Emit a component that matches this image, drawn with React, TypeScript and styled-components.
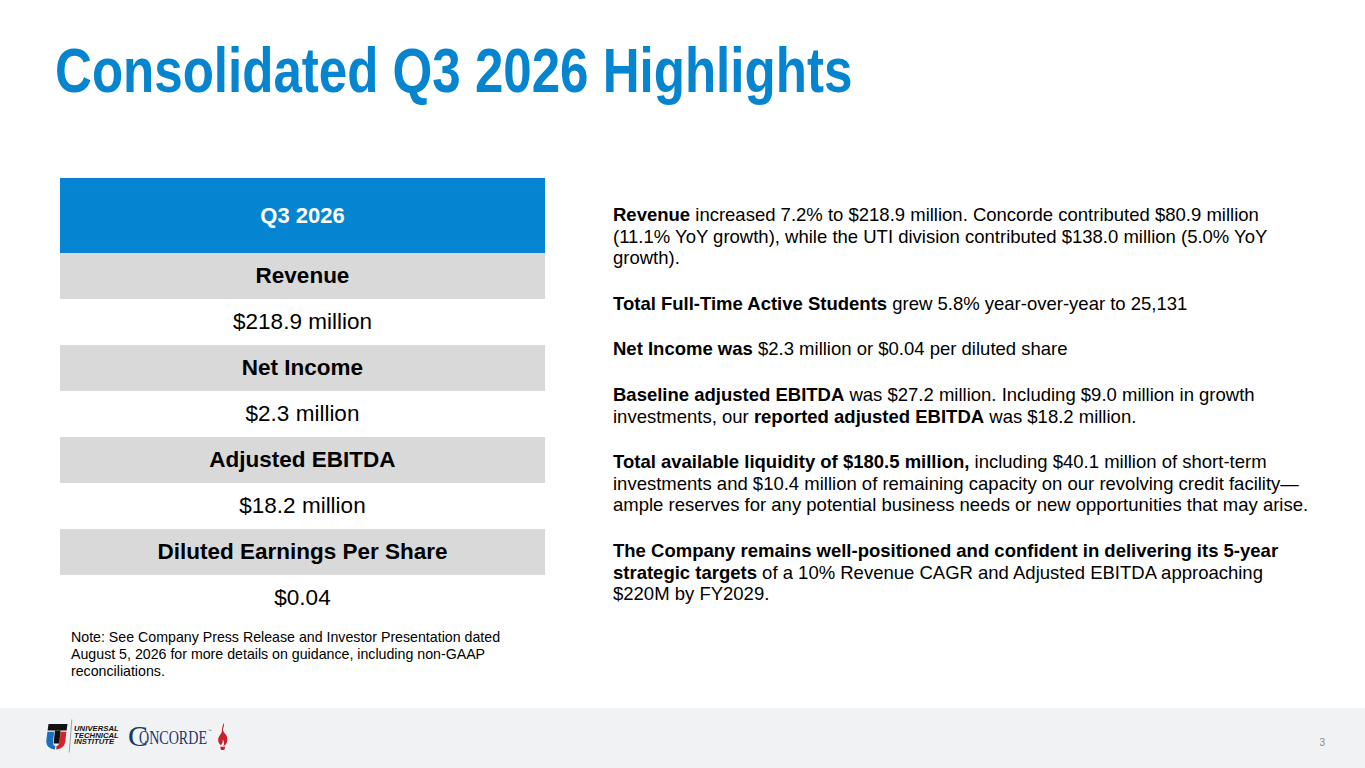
import { FC } from 'react'
import styled, { createGlobalStyle } from 'styled-components'

const GlobalStyle = createGlobalStyle`
  html, body {
    margin: 0;
    padding: 0;
    background: #ffffff;
  }
  body {
    font-family: "Liberation Sans", Arial, sans-serif;
    color: #000;
  }
`

const Slide = styled.div`
  width: 1365px;
  height: 768px;
  display: flex;
  flex-direction: column;
  overflow: hidden;
  background: #ffffff;
`

const TitleBar = styled.div`
  padding: 34px 0 0 55px;
  height: 72px;
`

// The deck uses a condensed bold face; no narrow family is installed, so squeeze the regular bold
const Title = styled.h1`
  display: inline-block;
  margin: 0;
  font-weight: 700;
  font-size: 62.5px;
  line-height: 72px;
  color: #0584d0;
  white-space: nowrap;
  transform: scaleX(0.817);
  transform-origin: left center;
`

const Body = styled.div`
  flex: 1;
  display: flex;
  column-gap: 68px;
  padding: 72px 0 0 60px;
`

const LeftColumn = styled.div`
  width: 485px;
  display: flex;
  flex-direction: column;
`

const Table = styled.div`
  display: flex;
  flex-direction: column;
`

const HeaderCell = styled.div`
  height: 75px;
  background: #0584d2;
  color: #ffffff;
  font-weight: 700;
  font-size: 22px;
  display: flex;
  align-items: center;
  justify-content: center;
`

const Cell = styled.div<{ $label?: boolean }>`
  height: 46px;
  background: ${p => (p.$label ? '#d9d9d9' : '#ffffff')};
  font-weight: ${p => (p.$label ? 700 : 400)};
  font-size: 22.5px;
  display: flex;
  align-items: center;
  justify-content: center;
`

const Note = styled.p`
  margin: 8px 0 0 11px;
  font-size: 14.2px;
  line-height: 17px;
  width: 460px;
`

const Highlights = styled.div`
  width: 700px;
  padding-top: 26px;
`

const Para = styled.p`
  margin: 0 0 24px;
  font-size: 18.5px;
  line-height: 21.6px;
  strong {
    font-weight: 700;
  }
`

const Footer = styled.footer`
  height: 60px;
  background: #f1f2f4;
  display: flex;
  align-items: center;
  justify-content: space-between;
  padding: 0 40px 0 45px;
`

const Logos = styled.div`
  display: flex;
  align-items: center;
  column-gap: 9px;
  margin-top: -4px;
`

const UtiLogo = styled.div`
  display: flex;
  align-items: center;
  column-gap: 1px;
`

const UtiWords = styled.div`
  display: flex;
  flex-direction: column;
  font-weight: 700;
  font-style: italic;
  font-size: 7.7px;
  line-height: 6.8px;
  letter-spacing: 0.05px;
  color: #111;
`

const ConcordeLogo = styled.div`
  display: flex;
  align-items: center;
  column-gap: 3px;
`

const PageNumber = styled.span`
  font-size: 10px;
  color: #8a8a8a;
  margin-top: 8px;
`

const rows = [
  { label: 'Revenue', value: '$218.9 million' },
  { label: 'Net Income', value: '$2.3 million' },
  { label: 'Adjusted EBITDA', value: '$18.2 million' },
  { label: 'Diluted Earnings Per Share', value: '$0.04' },
]

const UtiShield: FC = () => (
  <svg width="28" height="34" viewBox="0 0 28 34">
    {/* black T bar */}
    <polygon points="3.5,5 22.5,5 21.6,11.5 2.6,11.5" fill="#111" />
    {/* blue left half of the U */}
    <path d="M2.4,12.8 L9.2,12.8 L8,23 Q7.6,26 10.4,27 L9.9,30.5 Q1.6,29.5 1.2,22.5 Z" fill="#1a6fc0" />
    {/* red right half of the U */}
    <path d="M15.6,12.8 L21.4,12.8 L20.2,23 Q19,30 11.1,30.5 L11.6,27 Q14.2,26.2 14.6,23 Z" fill="#d2232a" />
    {/* T stem */}
    <polygon points="9.9,11.5 15.6,11.5 14.3,24.5 8.6,24.5" fill="#111" />
    {/* divider stroke */}
    <line x1="26.8" y1="0.5" x2="24.2" y2="33.5" stroke="#8c8c8c" strokeWidth="0.8" />
  </svg>
)

const ConcordeWord: FC = () => (
  <svg width="86" height="34" viewBox="0 0 86 34">
    <text x="0" y="27" fontFamily="Liberation Serif, serif" fontSize="30" fill="#1d3567">
      C
    </text>
    <text
      x="11"
      y="25"
      fontFamily="Liberation Serif, serif"
      fontSize="19.5"
      fill="#1d3567"
      textLength="68"
      lengthAdjust="spacingAndGlyphs"
    >
      ONCORDE
    </text>
    <text x="80.5" y="13" fontFamily="Liberation Sans, sans-serif" fontSize="3.2" fill="#1d3567">
      ™
    </text>
  </svg>
)

const Flame: FC = () => (
  <svg width="11" height="29" viewBox="0 0 11 28">
    <path
      d="M6.5,0.5 C8.3,4 4.6,6 6.8,9.5 C8.5,12 10.8,13.5 10.3,18 C9.9,21.5 7.8,23 6.3,23.6 C7.8,21 7,18.5 5.6,17 C6.2,19.5 5.2,21.3 4,22.7 C1.9,21.5 0.8,19 1.2,16.5 C1.8,13 5.1,11 5,7.5 C4.9,5 6.1,3 6.5,0.5 Z"
      fill="#c8202f"
    />
    <path d="M3.2,24.3 L8.2,24.3 L7.4,27.5 L4,27.5 Z" fill="#c8202f" />
  </svg>
)

const App: FC = () => (
  <>
    <GlobalStyle />
    <Slide>
      <TitleBar>
        <Title>Consolidated Q3 2026 Highlights</Title>
      </TitleBar>
      <Body>
        <LeftColumn>
          <Table>
            <HeaderCell>Q3 2026</HeaderCell>
            {rows.map(row => (
              <div key={row.label}>
                <Cell $label>{row.label}</Cell>
                <Cell>{row.value}</Cell>
              </div>
            ))}
          </Table>
          <Note>
            Note: See Company Press Release and Investor Presentation dated August 5, 2026 for more
            details on guidance, including non-GAAP reconciliations.
          </Note>
        </LeftColumn>
        <Highlights>
          <Para>
            <strong>Revenue</strong> increased 7.2% to $218.9 million. Concorde contributed $80.9 million
            (11.1% YoY growth), while the UTI division contributed $138.0 million (5.0% YoY growth).
          </Para>
          <Para>
            <strong>Total Full-Time Active Students</strong> grew 5.8% year-over-year to 25,131
          </Para>
          <Para>
            <strong>Net Income was</strong> $2.3 million or $0.04 per diluted share
          </Para>
          <Para>
            <strong>Baseline adjusted EBITDA</strong> was $27.2 million. Including $9.0 million in growth
            investments, our <strong>reported adjusted EBITDA</strong> was $18.2 million.
          </Para>
          <Para>
            <strong>Total available liquidity of $180.5 million,</strong> including $40.1 million of
            short-term investments and $10.4 million of remaining capacity on our revolving credit
            facility—ample reserves for any potential business needs or new opportunities that may arise.
          </Para>
          <Para>
            <strong>The Company remains well-positioned and confident in delivering its 5-year strategic
            targets</strong> of a 10% Revenue CAGR and Adjusted EBITDA approaching $220M by FY2029.
          </Para>
        </Highlights>
      </Body>
      <Footer>
        <Logos>
          <UtiLogo>
            <UtiShield />
            <UtiWords>
              <span>UNIVERSAL</span>
              <span>TECHNICAL</span>
              <span>INSTITUTE</span>
            </UtiWords>
          </UtiLogo>
          <ConcordeLogo>
            <ConcordeWord />
            <Flame />
          </ConcordeLogo>
        </Logos>
        <PageNumber>3</PageNumber>
      </Footer>
    </Slide>
  </>
)

export default App
